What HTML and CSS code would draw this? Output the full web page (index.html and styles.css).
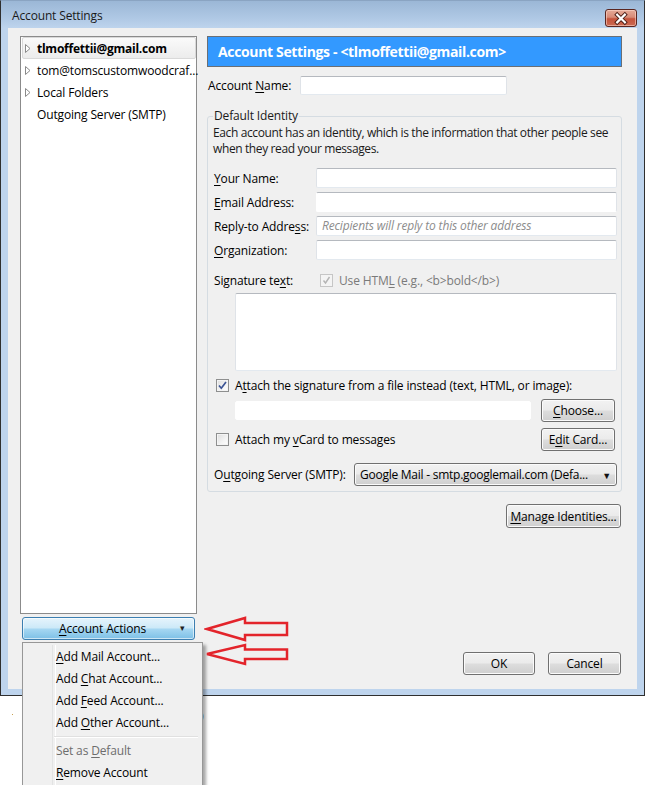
FILE: index.html
```html
<!DOCTYPE html>
<html>
<head>
<meta charset="utf-8">
<title>Account Settings</title>
<link rel="stylesheet" href="styles.css">
</head>
<body>
<div class="window">
  <div class="titlebar">
    <span class="title">Account Settings</span>
    <div class="close">
      <svg width="31" height="17" viewBox="0 0 31 17">
        <path d="M11.5 4.5 L19.5 12.5 M19.5 4.5 L11.5 12.5" stroke="#4b1d15" stroke-width="4.2" stroke-linecap="square" fill="none"/>
        <path d="M11.5 4.5 L19.5 12.5 M19.5 4.5 L11.5 12.5" stroke="#ffffff" stroke-width="2.2" stroke-linecap="square" fill="none"/>
      </svg>
    </div>
  </div>
  <div class="client">
    <div class="left">
      <div class="tree">
        <div class="row sel"><svg class="twisty" width="6" height="9" viewBox="0 0 6 9"><path d="M0.5 0.5 L5 4.5 L0.5 8.5 Z" fill="#fff" stroke="#8a8a8a"/></svg><b>tlmoffettii@gmail.com</b></div>
        <div class="row"><svg class="twisty" width="6" height="9" viewBox="0 0 6 9"><path d="M0.5 0.5 L5 4.5 L0.5 8.5 Z" fill="#fff" stroke="#8a8a8a"/></svg><span>tom@tomscustomwoodcraf...</span></div>
        <div class="row"><svg class="twisty" width="6" height="9" viewBox="0 0 6 9"><path d="M0.5 0.5 L5 4.5 L0.5 8.5 Z" fill="#fff" stroke="#8a8a8a"/></svg><span>Local Folders</span></div>
        <div class="row"><span class="notwisty"></span><span>Outgoing Server (SMTP)</span></div>
      </div>
      <div class="actions-btn"><span class="label"><u>A</u>ccount Actions</span><span class="drop">&#9662;</span></div>
    </div>
    <div class="right">
      <div class="header">Account Settings - &lt;tlmoffettii@gmail.com&gt;</div>
      <div class="acctname"><span class="lbl">Account <u>N</u>ame:</span><div class="input name"></div></div>
      <fieldset class="identity">
        <legend>Default Identity</legend>
        <p class="desc">Each account has an identity, which is the information that other people see when they read your messages.</p>
        <div class="idgrid">
          <span class="lbl"><u>Y</u>our Name:</span><div class="input"></div>
          <span class="lbl"><u>E</u>mail Address:</span><div class="input redacted"></div>
          <span class="lbl">Reply-to Addre<u>s</u>s:</span><div class="input"><span class="ph">Recipients will reply to this other address</span></div>
          <span class="lbl"><u>O</u>rganization:</span><div class="input"></div>
        </div>
        <div class="sigrow">
          <span class="lbl">Signature te<u>x</u>t:</span>
          <span class="cb disabled"><svg width="13" height="13" viewBox="0 0 13 13"><path d="M3.5 6.5 L5.5 9 L9.5 3" stroke="#b4b4b4" stroke-width="1.4" fill="none"/></svg></span>
          <span class="dim">Use HTM<u>L</u> (e.g., &lt;b&gt;bold&lt;/b&gt;)</span>
        </div>
        <div class="textarea"></div>
        <div class="chkrow">
          <span class="cb"><svg width="13" height="13" viewBox="0 0 13 13"><path d="M3 6.5 L5.3 9.2 L10 3" stroke="#3b5394" stroke-width="1.7" fill="none"/></svg></span>
          <span>A<u>t</u>tach the signature from a file instead (text, HTML, or image):</span>
        </div>
        <div class="filerow">
          <div class="input file"></div>
          <div class="btn small"><u>C</u>hoose...</div>
        </div>
        <div class="vcardrow">
          <span class="cb"></span>
          <span class="vtext">Attach my <u>v</u>Card to messages</span>
          <div class="btn small">E<u>d</u>it Card...</div>
        </div>
        <div class="smtprow">
          <span class="lbl">O<u>u</u>tgoing Server (SMTP):</span>
          <div class="select"><span>Google Mail - smtp.googlemail.com (Defa...</span><span class="sarrow">&#9660;</span></div>
        </div>
      </fieldset>
      <div class="manage-row"><div class="btn manage"><u>M</u>anage Identities...</div></div>
      <div class="footer"><div class="btn ok">OK</div><div class="btn cancel">Cancel</div></div>
    </div>
  </div>
</div>

<span class="stray-dot"></span>
<span class="stray-paren">)</span>

<div class="menu">
  <div class="item"><u>A</u>dd Mail Account...</div>
  <div class="item">Add <u>C</u>hat Account...</div>
  <div class="item">Add <u>F</u>eed Account...</div>
  <div class="item">Add <u>O</u>ther Account...</div>
  <div class="sep"></div>
  <div class="item disabled">Set as <u>D</u>efault</div>
  <div class="item"><u>R</u>emove Account</div>
</div>

<svg class="arrows" width="88" height="54" viewBox="0 0 88 54">
  <path d="M3 15 L41 4 L41 9 L83 9 L83 21 L41 21 L41 26 Z" fill="none" stroke="#e3242b" stroke-width="2.5" stroke-linejoin="miter"/>
  <path d="M3 40 L41 31 L41 35.5 L83 35.5 L83 45 L41 45 L41 50 Z" fill="none" stroke="#e3242b" stroke-width="2.5" stroke-linejoin="miter"/>
</svg>
</body>
</html>
```

FILE: styles.css
```css
* { box-sizing: border-box; }
html, body { margin: 0; padding: 0; }
body {
  width: 645px;
  height: 785px;
  background: #ffffff;
  font-family: "Open Sans", "Noto Sans", sans-serif;
  font-size: 12px;
  letter-spacing: -0.15px;
  color: #000;
  position: relative;
  overflow: hidden;
}
u { text-decoration: underline; text-underline-offset: 2px; }

.window {
  width: 645px;
  height: 696px;
  border: 1px solid #2f2f2f;
  border-top-color: #8aa4c2;
  background: linear-gradient(#9bb7d6 0px, #b0c9e5 18px, #bed4ed 27px, #bed4ed 100%);
  display: flex;
  flex-direction: column;
  padding: 0 7px 6px 7px;
}
.titlebar {
  height: 27px;
  display: flex;
  align-items: center;
  justify-content: space-between;
  padding-left: 4px;
  flex: none;
}
.title { color: #1a1a1a; font-size: 12px; padding-top: 2px; }
.close {
  width: 32px;
  height: 18px;
  margin-top: 8px;
  border: 1px solid #5a2620;
  border-radius: 3px;
  background: linear-gradient(#e5aa98 0%, #d88b77 45%, #c4533c 55%, #cc6a52 100%);
  box-shadow: inset 0 0 0 1px rgba(255,220,210,0.55);
  display: flex;
  align-items: center;
  justify-content: center;
  align-self: flex-start;
}
.close svg { display: block; }

.client {
  flex: none;
  height: 661px;
  background: #f0f0f0;
  display: flex;
  gap: 10px;
  padding: 8px 15px 14px 12px;
}

.left { width: 177px; display: flex; flex-direction: column; flex: none; }
.tree {
  height: 578px;
  border: 1px solid #8b8b8b;
  background: #fff;
}
.row {
  height: 22px;
  margin: 0 0 0 1px;
  display: flex;
  align-items: center;
  padding-left: 2px;
  white-space: nowrap;
  border: 1px solid transparent;
}
.row.sel {
  border: 1px solid #d9d9d9;
  border-radius: 2px;
  background: linear-gradient(#fafafa, #ececec);
}
.row .twisty { flex: none; margin-right: 6px; display: block; }
.row .notwisty { width: 12px; flex: none; }
.row b { font-weight: 700; letter-spacing: -0.25px; }

.actions-btn {
  margin-top: 3px;
  margin-left: 2px;
  width: 173px;
  height: 23px;
  border: 1px solid #3c7fb1;
  border-radius: 3px;
  background: linear-gradient(#e6f4fc 0%, #cce9f8 48%, #a6d7f2 52%, #7dc0e6 100%);
  box-shadow: inset 0 0 0 1px rgba(255,255,255,0.6);
  display: flex;
  align-items: center;
  position: relative;
}
.actions-btn .label { flex: 1; text-align: center; padding-right: 12px; }
.actions-btn .drop { position: absolute; right: 9px; top: 3px; font-size: 9px; color: #222; }

.right { width: 415px; display: flex; flex-direction: column; flex: none; }
.header {
  height: 31px;
  border: 1px solid #6a6f75;
  background: #3399ff;
  color: #fff;
  font-weight: 700;
  font-size: 14px;
  letter-spacing: -0.35px;
  display: flex;
  align-items: center;
  padding-left: 10px;
}
.acctname {
  margin-top: 9px;
  height: 19px;
  display: flex;
  align-items: center;
}
.acctname .lbl { width: 93px; padding-left: 1px; }
.input {
  height: 20px;
  background: #fff;
  border: 1px solid;
  border-color: #b5b9bf #dfe3e8 #e3e9ef #dfe3e8;
  border-radius: 2px;
}
.input.name { width: 207px; height: 19px; }

.identity {
  margin: 13px 0 0 0;
  padding: 0 4px 5px 5px;
  border: 1px solid #d5dce2;
  border-radius: 3px;
  min-width: 0;
}
.identity legend {
  padding: 0 1px;
  line-height: 16px;
  color: #1a1a1a;
}
.desc {
  margin: 1px 0 0 0;
  line-height: 16px;
  color: #1a1a1a;
  letter-spacing: -0.38px;
}
.idgrid {
  margin-top: 11px;
  display: grid;
  grid-template-columns: 103px 301px;
  row-gap: 4px;
  align-items: center;
}
.idgrid .lbl { padding-left: 1px; }
.idgrid .input { height: 20px; }
.input.redacted { border-left-color: #fff; border-bottom-color: #fff; }
.ph { font-style: italic; color: #8c8c8c; line-height: 18px; padding-left: 5px; white-space: nowrap; }

.sigrow {
  margin-top: 10px;
  height: 20px;
  display: flex;
  align-items: center;
}
.sigrow .lbl { width: 107px; padding-left: 1px; }
.sigrow .dim { color: #7a7a7a; margin-left: 6px; }

.cb {
  width: 13px;
  height: 13px;
  flex: none;
  border: 1px solid #8e8f8f;
  background: linear-gradient(135deg, #dcdcdc 0%, #f4f4f4 60%, #ffffff 100%);
  box-shadow: inset 0 0 0 1px #f4f4f4;
  position: relative;
  display: block;
}
.cb svg { position: absolute; left: -1px; top: -1px; }
.cb.disabled { border-color: #c6c6c6; background: #f4f4f4; }

.textarea {
  margin: 3px 0 0 22px;
  width: 382px;
  height: 78px;
  background: #fff;
  border: 1px solid;
  border-color: #b5b9bf #dfe3e8 #e3e9ef #dfe3e8;
  border-radius: 2px;
}
.chkrow {
  margin-top: 5px;
  height: 18px;
  display: flex;
  align-items: center;
  padding-left: 3px;
  gap: 6px;
}
.filerow {
  margin-top: 5px;
  height: 23px;
  display: flex;
  align-items: center;
  padding-left: 22px;
}
.input.file { width: 296px; height: 19px; border-color: #fff; }
.btn {
  height: 23px;
  border: 1px solid #707070;
  border-radius: 3px;
  background: linear-gradient(#f2f2f2 0%, #ebebeb 48%, #dddddd 52%, #cfcfcf 100%);
  box-shadow: inset 0 0 0 1px #fbfbfb;
  display: flex;
  align-items: center;
  justify-content: center;
  flex: none;
}
.btn.small { width: 74px; margin-left: auto; margin-right: 2px; }
.vcardrow {
  margin-top: 6px;
  height: 23px;
  display: flex;
  align-items: center;
  padding-left: 3px;
}
.vtext { margin-left: 6px; }
.smtprow {
  margin-top: 12px;
  height: 23px;
  display: flex;
  align-items: center;
}
.smtprow .lbl { width: 141px; padding-left: 1px; }
.select {
  width: 263px;
  height: 23px;
  border: 1px solid #707070;
  border-radius: 3px;
  background: linear-gradient(#f2f2f2 0%, #ebebeb 48%, #dddddd 52%, #cfcfcf 100%);
  box-shadow: inset 0 0 0 1px #fbfbfb;
  display: flex;
  align-items: center;
  padding-left: 5px;
  position: relative;
  white-space: nowrap;
  letter-spacing: -0.25px;
}
.sarrow { position: absolute; right: 5px; top: 5px; font-size: 9px; color: #111; }

.manage-row { margin-top: 12px; display: flex; justify-content: flex-end; padding-right: 1px; }
.btn.manage { width: 115px; height: 24px; }

.footer {
  margin-top: auto;
  display: flex;
  justify-content: flex-end;
  gap: 13px;
  padding-right: 1px;
}
.btn.ok { width: 72px; }
.btn.cancel { width: 73px; }

.menu {
  position: absolute;
  left: 22px;
  top: 642px;
  width: 181px;
  height: 150px;
  border: 1px solid #979797;
  background: #f0f0f0;
  padding: 3px 0 0 0;
  box-shadow: 3px 3px 3px rgba(0,0,0,0.35);
}
.menu::before {
  content: "";
  position: absolute;
  left: 29px;
  top: 2px;
  bottom: 0;
  width: 2px;
  border-left: 1px solid #e2e3e3;
  border-right: 1px solid #ffffff;
}
.menu .item {
  height: 22px;
  line-height: 22px;
  padding-left: 33px;
  color: #000;
  position: relative;
}
.menu .item.disabled { color: #6d6d6d; }
.menu .sep {
  height: 6px;
  margin-left: 31px;
  margin-right: 4px;
  position: relative;
}
.menu .sep::after {
  content: "";
  position: absolute;
  left: 0; right: 0; top: 2px;
  border-top: 1px solid #e0e0e0;
  border-bottom: 1px solid #ffffff;
}

.arrows { position: absolute; left: 204px; top: 614px; }
.stray-dot { position: absolute; left: 12px; top: 714px; width: 1px; height: 1px; background: #c8a050; }
.stray-paren { position: absolute; left: 200px; top: 709px; font-size: 12px; line-height: 14px; }
```
